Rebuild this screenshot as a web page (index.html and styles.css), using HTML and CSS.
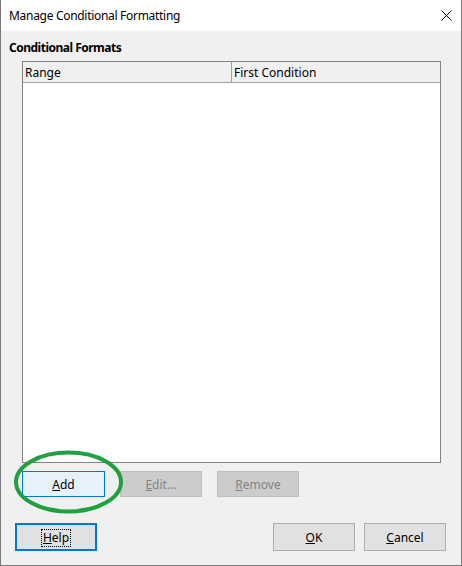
FILE: index.html
```html
<!DOCTYPE html>
<html>
<head>
<meta charset="utf-8">
<link rel="stylesheet" href="styles.css">
</head>
<body>
<div class="window">
  <div class="titlebar">
    <span class="title">Manage Conditional Formatting</span>
    <svg class="close" width="11" height="11" viewBox="0 0 11 11"><path d="M0.5 0.5 L10.5 10.5 M10.5 0.5 L0.5 10.5" stroke="#000" stroke-width="1" fill="none"/></svg>
  </div>
  <div class="content">
    <div class="section-label">Conditional Formats</div>
    <div class="list">
      <div class="list-header">
        <div class="col col-range">Range</div>
        <div class="col col-cond">First Condition</div>
      </div>
      <div class="list-body"></div>
    </div>
    <div class="action-row">
      <div class="add-wrap">
        <button class="btn btn-hot"><u>A</u>dd</button>
        <svg class="ring" width="113" height="66" viewBox="0 0 113 66"><ellipse cx="56.5" cy="33" rx="52.5" ry="29.5" fill="none" stroke="#1fa13f" stroke-width="4"/></svg>
      </div>
      <button class="btn btn-disabled"><u>E</u>dit...</button>
      <button class="btn btn-disabled"><u>R</u>emove</button>
    </div>
  </div>
  <div class="footer">
    <button class="btn btn-default"><span class="focus"><u>H</u>elp</span></button>
    <div class="footer-right">
      <button class="btn"><u>O</u>K</button>
      <button class="btn"><u>C</u>ancel</button>
    </div>
  </div>
</div>
</body>
</html>
```

FILE: styles.css
```css
html, body {
  margin: 0;
  padding: 0;
  background: #f0f0f0;
}
body {
  font-family: "Noto Sans", "Liberation Sans", sans-serif;
  font-size: 12px;
  color: #000;
}
.window {
  width: 462px;
  height: 566px;
  box-sizing: border-box;
  border: 1px solid #7a7a7a;
  border-top: none;
  background: #f0f0f0;
  display: flex;
  flex-direction: column;
}
.titlebar {
  height: 31px;
  background: #fff;
  display: flex;
  align-items: center;
  justify-content: space-between;
  padding: 0 9px 0 8px;
  flex-shrink: 0;
}
.title {
  font-size: 12px;
  letter-spacing: -0.3px;
  margin-top: -1px;
}
.close {
  margin-top: -1px;
  display: block;
}
.content {
  padding: 8px 20px 0 8px;
}
.section-label {
  font-weight: bold;
  font-size: 12px;
  letter-spacing: -0.5px;
  height: 22px;
  line-height: 17px;
}
.list {
  margin-left: 13px;
  width: 419px;
  height: 402px;
  box-sizing: border-box;
  border: 1px solid #828282;
  background: #fff;
  display: flex;
  flex-direction: column;
}
.list-header {
  display: flex;
  height: 20px;
  background: #f0f0f0;
  border-bottom: 1px solid #a0a0a0;
  flex-shrink: 0;
}
.col {
  line-height: 21px;
  padding-left: 2px;
  box-sizing: border-box;
}
.col-range {
  width: 209px;
  border-right: 1px solid #a0a0a0;
}
.col-cond {
  flex: 1;
}
.list-body {
  flex: 1;
  background: #fff;
}
.action-row {
  display: flex;
  gap: 15px;
  margin-top: 8px;
  margin-left: 13px;
}
.add-wrap {
  position: relative;
}
.ring {
  position: absolute;
  left: -10px;
  top: -22px;
  pointer-events: none;
}
.btn {
  font-family: "Noto Sans", "Liberation Sans", sans-serif;
  font-size: 12px;
  width: 82px;
  height: 26px;
  box-sizing: border-box;
  border: 1px solid #adadad;
  background: #e1e1e1;
  color: #000;
  padding: 0;
  margin: 0;
}
.btn-hot {
  width: 83px;
  background: #e5f1fb;
  border-color: #0078d7;
}
.btn-disabled {
  background: #cccccc;
  border-color: #bfbfbf;
  color: #838383;
}
.footer {
  margin-top: auto;
  display: flex;
  justify-content: space-between;
  padding: 0 15px 14px 14px;
}
.footer .btn {
  height: 28px;
}
.footer-right {
  display: flex;
  gap: 9px;
}
.btn-default {
  border: 2px solid #0078d7;
}
.focus {
  display: inline-block;
  outline: 1px dotted #000;
  padding: 0 1px;
  line-height: 16px;
}
```
